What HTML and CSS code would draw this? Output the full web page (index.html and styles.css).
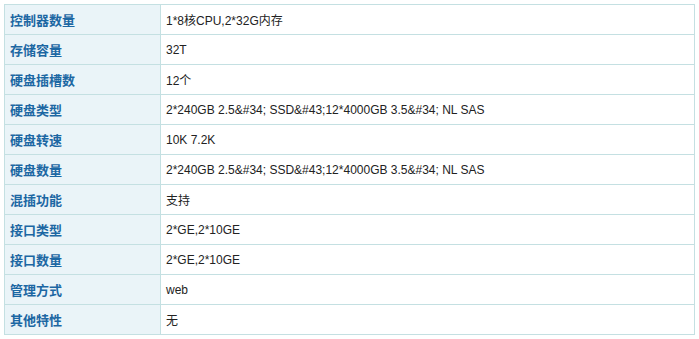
FILE: index.html
```html
<!DOCTYPE html>
<html>
<head>
<meta charset="utf-8">
<link rel="stylesheet" href="styles.css">
</head>
<body>
<table class="spec">
<tr><th>控制器数量</th><td>1*8核CPU,2*32G内存</td></tr>
<tr><th>存储容量</th><td>32T</td></tr>
<tr><th>硬盘插槽数</th><td>12个</td></tr>
<tr><th>硬盘类型</th><td>2*240GB 2.5&amp;#34; SSD&amp;#43;12*4000GB 3.5&amp;#34; NL SAS</td></tr>
<tr><th>硬盘转速</th><td>10K 7.2K</td></tr>
<tr><th>硬盘数量</th><td>2*240GB 2.5&amp;#34; SSD&amp;#43;12*4000GB 3.5&amp;#34; NL SAS</td></tr>
<tr><th>混插功能</th><td>支持</td></tr>
<tr><th>接口类型</th><td>2*GE,2*10GE</td></tr>
<tr><th>接口数量</th><td>2*GE,2*10GE</td></tr>
<tr><th>管理方式</th><td>web</td></tr>
<tr><th>其他特性</th><td>无</td></tr>
</table>
</body>
</html>
```
FILE: styles.css
```css
html, body {
  margin: 0;
  padding: 0;
  background: #ffffff;
}
.spec {
  margin: 4px 0 0 4px;
  width: 691px;
  border-collapse: collapse;
  table-layout: fixed;
  font-family: "Liberation Sans", Arial, "Noto Sans CJK SC", sans-serif;
}
.spec th, .spec td {
  height: 29px;
  padding: 0 0 0 5px;
  border: 1px solid #c4e0e2;
  text-align: left;
  vertical-align: middle;
}
.spec th {
  width: 150px;
  background: #eaf4f8;
  color: #1c67a3;
  font-family: "Noto Sans CJK SC", sans-serif;
  font-weight: bold;
  font-size: 13px;
}
.spec td {
  color: #222222;
  font-size: 12px;
}
```
